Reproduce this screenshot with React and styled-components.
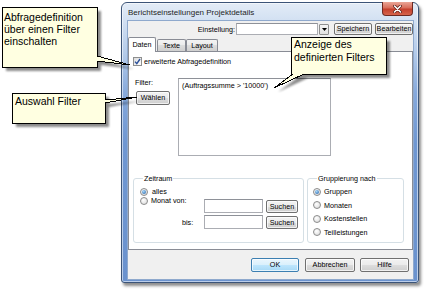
import React from 'react';
import styled, { createGlobalStyle } from 'styled-components';

const FONT = '"Liberation Sans", Arial, sans-serif';

const GlobalStyle = createGlobalStyle`
  html, body {
    margin: 0;
    padding: 0;
    background: #fff;
  }
  body {
    font-family: ${FONT};
    color: #000;
  }
`;

const Page = styled.div`
  position: relative;
  width: 428px;
  height: 293px;
  box-sizing: border-box;
  padding: 2px 0 0 121px;
  overflow: hidden;
`;

const Window = styled.div`
  box-sizing: border-box;
  width: 298px;
  height: 281px;
  display: flex;
  flex-direction: column;
  padding: 0 4px 2px 5px;
  border: 1px solid #3b5478;
  border-radius: 6px 6px 3px 3px;
  background: linear-gradient(to bottom, #e3ecf7 0, #d2e0f2 18px, #b4cbea 50px, #86a9dc 90px, #6f97d2 140px, #6a92ce 100%);
  box-shadow: 2px 3px 3px rgba(0, 0, 0, 0.45), inset 0 0 0 1px rgba(255, 255, 255, 0.55);
`;

const TitleBar = styled.div`
  height: 17px;
  display: flex;
  justify-content: space-between;
  align-items: flex-start;
`;

const Title = styled.div`
  padding: 5px 0 0 1px;
  font-size: 8px;
  line-height: 9px;
  color: #1e1e1e;
  white-space: nowrap;
`;

const CloseButton = styled.div`
  box-sizing: border-box;
  width: 31px;
  height: 14px;
  margin: -1px 1px 0 0;
  display: flex;
  align-items: center;
  justify-content: center;
  border: 1px solid #6d2a22;
  border-top: none;
  border-radius: 0 0 4px 4px;
  background: linear-gradient(#eaa596, #d86d5a 45%, #c4402d 55%, #d6644c);
`;

const Client = styled.div`
  flex: 1;
  display: flex;
  flex-direction: column;
  background: #f0f0f0;
  border: 1px solid #8fa9cd;
  font-size: 7.2px;
`;

const Toolbar = styled.div`
  display: flex;
  justify-content: flex-end;
  align-items: center;
  height: 12px;
  margin-top: 2px;
`;

const Label = styled.span`
  line-height: 9px;
  white-space: nowrap;
  padding-left: ${p => p.$pl || 0}px;
  margin-right: ${p => p.$mr || 0}px;
`;

const TextField = styled.div`
  box-sizing: border-box;
  width: ${p => p.$w}px;
  height: ${p => p.$h || 14}px;
  margin-top: ${p => p.$mt || 0}px;
  background: #fff;
  border: 1px solid #abadb3;
  border-top-color: #8e9198;
`;

const ComboArrow = styled.div`
  box-sizing: border-box;
  width: 10px;
  height: 11px;
  margin-left: 1px;
  display: flex;
  align-items: center;
  justify-content: center;
  border: 1px solid #8e8f8f;
  border-radius: 1px;
  background: linear-gradient(#f4f4f4, #e2e2e2);
`;

const Button = styled.button`
  box-sizing: border-box;
  width: ${p => p.$w}px;
  height: ${p => p.$h || 13}px;
  margin: ${p => p.$mt || 0}px 0 0 ${p => p.$ml || 0}px;
  padding: 0;
  font: 7.2px/1 ${FONT};
  color: #000;
  border: 1px solid ${p => (p.$primary ? '#3c7fb1' : '#707070')};
  border-radius: 2px;
  background: ${p =>
    p.$primary
      ? 'linear-gradient(#eaf6fd, #d9f0fc 50%, #bee6fd 50%, #a7d9f5)'
      : 'linear-gradient(#f2f2f2, #ebebeb 50%, #dddddd 50%, #cfcfcf)'};
  box-shadow: inset 0 0 0 1px rgba(255, 255, 255, 0.7);
`;

const TabRow = styled.div`
  position: relative;
  z-index: 1;
  display: flex;
  align-items: flex-end;
  height: 14px;
  margin-top: 2px;
`;

const Tab = styled.div`
  box-sizing: border-box;
  width: ${p => p.$w}px;
  height: ${p => (p.$active ? 15 : 12)}px;
  margin-bottom: ${p => (p.$active ? -1 : 0)}px;
  margin-right: ${p => (p.$active ? 1 : 0)}px;
  display: flex;
  align-items: center;
  justify-content: center;
  padding-bottom: ${p => (p.$active ? 1 : 0)}px;
  border: 1px solid #898c95;
  border-bottom: none;
  border-radius: 2px 2px 0 0;
  background: ${p => (p.$active ? '#fff' : 'linear-gradient(#f3f3f3, #ebebeb 50%, #dddddd 50%, #cfcfcf)')};
`;

const Panel = styled.div`
  box-sizing: border-box;
  height: 199px;
  display: flex;
  flex-direction: column;
  padding: 5px 8px 0 4px;
  background: #fff;
  border: 1px solid #898c95;
`;

const OptionRow = styled.div`
  display: flex;
  align-items: center;
  height: 9px;
  gap: ${p => p.$gap || 3}px;
  margin-top: ${p => p.$mt || 0}px;
  padding-left: ${p => p.$pl || 0}px;
`;

const CheckBox = styled.span`
  box-sizing: border-box;
  width: 9px;
  height: 9px;
  display: flex;
  align-items: center;
  justify-content: center;
  border: 1px solid #8e8f8f;
  background: linear-gradient(135deg, #dcdcdc, #fff);
`;

const Radio = styled.span`
  box-sizing: border-box;
  width: 8px;
  height: 8px;
  flex: none;
  display: flex;
  align-items: center;
  justify-content: center;
  border-radius: 50%;
  border: 1px solid #8b8b8b;
  background: radial-gradient(circle at 40% 35%, #fff, #d6d6d6);

  &::after {
    content: '';
    width: 4px;
    height: 4px;
    border-radius: 50%;
    background: ${p => (p.$on ? 'radial-gradient(circle at 40% 35%, #a5d6f7, #1d5ca6)' : 'transparent')};
  }
`;

const FilterRow = styled.div`
  display: flex;
  margin-top: 12px;
`;

const FilterSide = styled.div`
  width: 45px;
  display: flex;
  flex-direction: column;
  align-items: flex-start;
`;

const FilterBox = styled.div`
  box-sizing: border-box;
  width: 153px;
  height: 78px;
  padding: 2px 3px;
  line-height: 9px;
  white-space: nowrap;
  border: 1px solid #abadb3;
  border-top-color: #8e9198;
`;

const GroupRow = styled.div`
  display: flex;
  gap: 3px;
  margin-top: 22px;
`;

const GroupBox = styled.div`
  box-sizing: border-box;
  width: ${p => p.$w}px;
  height: 65px;
  padding-left: ${p => p.$pl}px;
  border: 1px solid #d5dfe5;
  border-radius: 3px;
  box-shadow: inset 1px 1px 0 #fff;
`;

const Legend = styled.div`
  display: table;
  margin: -5px 0 0 ${p => p.$ml}px;
  padding: 0 1px;
  line-height: 9px;
  background: #fff;
  white-space: nowrap;
`;

const GroupBody = styled.div`
  display: flex;
  flex-direction: column;
  gap: ${p => p.$gap || 0}px;
  margin-top: 4px;
`;

const FieldGrid = styled.div`
  display: grid;
  grid-template-columns: 61px 59px 32px;
  column-gap: 3px;
  align-items: start;
  margin-top: ${p => p.$mt || 0}px;
`;

const Footer = styled.div`
  flex: 1;
  display: flex;
  justify-content: flex-end;
  align-items: flex-start;
  padding: 8px 4px 0 0;
`;

const Overlay = styled.svg`
  position: absolute;
  left: 0;
  top: 0;
  width: 428px;
  height: 293px;
  pointer-events: none;
`;

const CalloutText = styled.div`
  position: absolute;
  left: ${p => p.$x}px;
  top: ${p => p.$y}px;
  font-size: 10.5px;
  line-height: ${p => p.$lh || 12}px;
  color: #000;
  white-space: nowrap;
`;

const callouts = [
  'M2,7 H97 V56 L130,65 L97,61 V67 H2 Z',
  'M12,93 H105 V100 L137,97 L105,103 V123 H12 Z',
  'M291,37 H386 V74 H304 L274,88 L293,74 H291 Z',
];

const App = () => (
  <Page>
    <GlobalStyle />
    <Window>
      <TitleBar>
        <Title>Berichtseinstellungen Projektdetails</Title>
        <CloseButton>
          <svg width="9" height="8" viewBox="0 0 9 8">
            <path d="M1.5 1 L7.5 7 M7.5 1 L1.5 7" stroke="#5a1c14" strokeWidth="3" strokeLinecap="round" />
            <path d="M1.5 1 L7.5 7 M7.5 1 L1.5 7" stroke="#fff" strokeWidth="1.6" strokeLinecap="round" />
          </svg>
        </CloseButton>
      </TitleBar>
      <Client>
        <Toolbar>
          <Label $mr={1}>Einstellung:</Label>
          <TextField $w={82} $h={12} />
          <ComboArrow>
            <svg width="5" height="3" viewBox="0 0 5 3">
              <path d="M0 0 H5 L2.5 3 Z" fill="#000" />
            </svg>
          </ComboArrow>
          <Button $w={38} $h={12} $ml={5}>Speichern</Button>
          <Button $w={38} $h={12} $ml={3}>Bearbeiten</Button>
        </Toolbar>
        <TabRow>
          <Tab $w={28} $active>Daten</Tab>
          <Tab $w={29}>Texte</Tab>
          <Tab $w={32}>Layout</Tab>
        </TabRow>
        <Panel>
          <OptionRow $gap={2}>
            <CheckBox>
              <svg width="7" height="7" viewBox="0 0 7 7">
                <path d="M1 3.6 L2.8 5.6 L6 1" fill="none" stroke="#2a4f9a" strokeWidth="1.4" />
              </svg>
            </CheckBox>
            <Label>erweiterte Abfragedefinition</Label>
          </OptionRow>
          <FilterRow>
            <FilterSide>
              <Label $pl={2}>Filter:</Label>
              <Button $w={34} $h={14} $ml={3} $mt={4}>Wählen</Button>
            </FilterSide>
            <FilterBox>(Auftragssumme &gt; '10000')</FilterBox>
          </FilterRow>
          <GroupRow>
            <GroupBox $w={171} $pl={6}>
              <Legend $ml={3}>Zeitraum</Legend>
              <GroupBody>
                <OptionRow $gap={4}>
                  <Radio $on />
                  <Label>alles</Label>
                </OptionRow>
                <FieldGrid>
                  <OptionRow>
                    <Radio />
                    <Label>Monat von:</Label>
                  </OptionRow>
                  <TextField $w={59} $mt={3} />
                  <Button $w={32} $mt={4}>Suchen</Button>
                </FieldGrid>
                <FieldGrid $mt={2}>
                  <OptionRow $pl={42} $mt={3}>
                    <Label>bis:</Label>
                  </OptionRow>
                  <TextField $w={59} />
                  <Button $w={32} $mt={1}>Suchen</Button>
                </FieldGrid>
              </GroupBody>
            </GroupBox>
            <GroupBox $w={97} $pl={5}>
              <Legend $ml={4}>Gruppierung nach</Legend>
              <GroupBody $gap={4.5}>
                <OptionRow>
                  <Radio $on />
                  <Label>Gruppen</Label>
                </OptionRow>
                <OptionRow>
                  <Radio />
                  <Label>Monaten</Label>
                </OptionRow>
                <OptionRow>
                  <Radio />
                  <Label>Kostenstellen</Label>
                </OptionRow>
                <OptionRow>
                  <Radio />
                  <Label>Teilleistungen</Label>
                </OptionRow>
              </GroupBody>
            </GroupBox>
          </GroupRow>
        </Panel>
        <Footer>
          <Button $w={48} $h={14} $primary>OK</Button>
          <Button $w={50} $h={14} $ml={6}>Abbrechen</Button>
          <Button $w={49} $h={14} $ml={5}>Hilfe</Button>
        </Footer>
      </Client>
    </Window>
    <Overlay viewBox="0 0 428 293">
      <defs>
        <filter id="soft" x="-10%" y="-10%" width="130%" height="130%">
          <feGaussianBlur stdDeviation="1.2" />
        </filter>
      </defs>
      {callouts.map(d => (
        <path key={`s${d}`} d={d} transform="translate(4 4)" fill="#000" opacity="0.45" filter="url(#soft)" />
      ))}
      {callouts.map(d => (
        <path key={d} d={d} fill="#ffffe1" stroke="#000" strokeWidth="1" shapeRendering="crispEdges" />
      ))}
    </Overlay>
    <CalloutText $x={4} $y={11}>
      Abfragedefinition
      <br />
      über einen Filter
      <br />
      einschalten
    </CalloutText>
    <CalloutText $x={15} $y={95}>Auswahl Filter</CalloutText>
    <CalloutText $x={294} $y={38} $lh={13}>
      Anzeige des
      <br />
      definierten Filters
    </CalloutText>
  </Page>
);

export default App;
